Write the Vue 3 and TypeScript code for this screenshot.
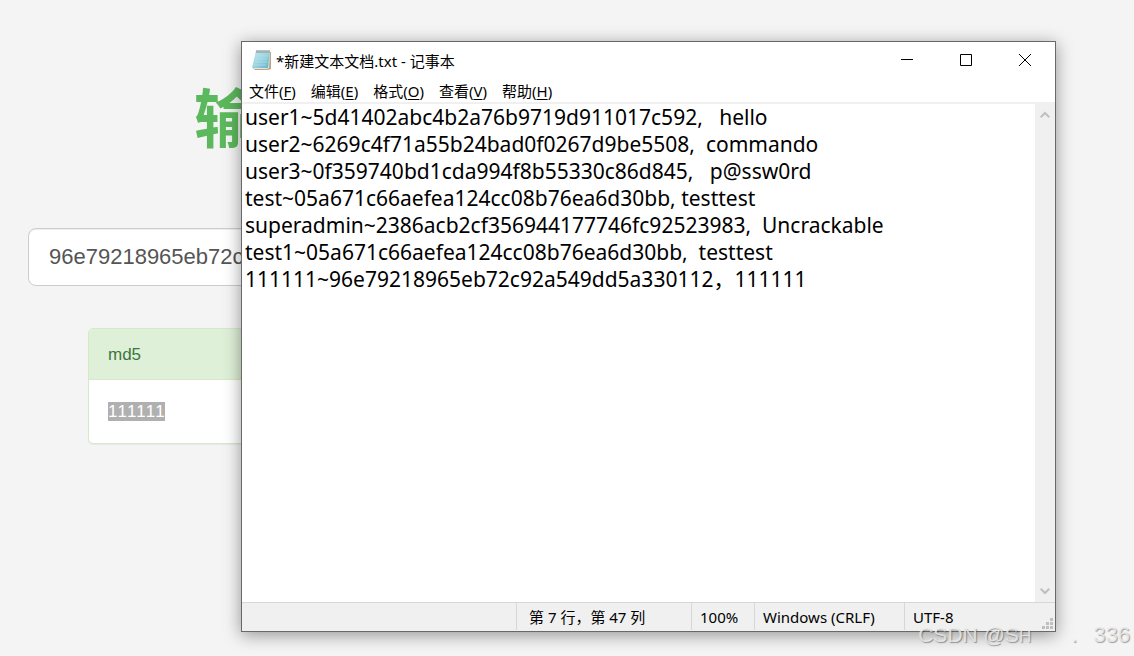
<script setup lang="ts">
import { ref } from 'vue'

interface MenuItem {
  label: string
  key: string
}

const menus: MenuItem[] = [
  { label: '文件', key: 'F' },
  { label: '编辑', key: 'E' },
  { label: '格式', key: 'O' },
  { label: '查看', key: 'V' },
  { label: '帮助', key: 'H' },
]

const hash = ref('96e79218965eb72c92a549dd5a330112')

const content = ref(
  [
    'user1~5d41402abc4b2a76b9719d911017c592,   hello',
    'user2~6269c4f71a55b24bad0f0267d9be5508,  commando',
    'user3~0f359740bd1cda994f8b55330c86d845,   p@ssw0rd',
    'test~05a671c66aefea124cc08b76ea6d30bb, testtest',
    'superadmin~2386acb2cf356944177746fc92523983,  Uncrackable',
    'test1~05a671c66aefea124cc08b76ea6d30bb,  testtest',
    '111111~96e79218965eb72c92a549dd5a330112，111111',
  ].join('\n'),
)
</script>

<template>
  <div class="desktop">
    <main class="page">
      <h1 class="heading">输</h1>
      <input v-model="hash" class="hash" type="text" aria-label="md5" />
      <section class="panel">
        <h2 class="panel-head">md5</h2>
        <p class="panel-body"><span class="selected">111111</span></p>
      </section>
    </main>

    <section class="window">
      <header class="titlebar">
        <svg class="app-icon" width="22" height="22" viewBox="0 0 22 22" aria-hidden="true">
          <defs>
            <linearGradient id="pad" x1="0" y1="0" x2="1" y2="1">
              <stop offset="0" stop-color="#c4e9f0" />
              <stop offset="0.5" stop-color="#9ad5e2" />
              <stop offset="1" stop-color="#5fb0c6" />
            </linearGradient>
          </defs>
          <path d="M5 3 L20 3 L20 20 L17 21 L4 21 L2 19 Z" fill="#b9a68a" />
          <path d="M5 2 L19 2 L18 19 L16 20 L3 20 Z" fill="#e9e4d8" />
          <path d="M5 2 L19 2 L17 19 L1 19 Z" fill="url(#pad)" />
          <path d="M5 2 L19 2 L19 4 L5 4 Z" fill="#d8e3e4" />
          <path d="M6 1v3M8 1v3M10 1v3M12 1v3M14 1v3M16 1v3M18 1v3" stroke="#6f8488" stroke-width="1" />
          <path d="M5 7h12M4 10h12M4 13h12M3 16h12" stroke="#bce4eb" stroke-width="1" opacity="0.6" />
        </svg>
        <span class="title">*新建文本文档.txt - 记事本</span>
        <div class="controls">
          <button type="button" aria-label="最小化">
            <svg width="12" height="12" viewBox="0 0 12 12"><path d="M0 5.5h12" stroke="#000" /></svg>
          </button>
          <button type="button" aria-label="最大化">
            <svg width="12" height="12" viewBox="0 0 12 12"><path d="M.5 .5h11v11H.5z" stroke="#000" fill="none" /></svg>
          </button>
          <button type="button" aria-label="关闭">
            <svg width="12" height="12" viewBox="0 0 12 12"><path d="M0 0L12 12M12 0L0 12" stroke="#000" /></svg>
          </button>
        </div>
      </header>

      <nav class="menubar">
        <button v-for="m in menus" :key="m.key" type="button">{{ m.label }}(<u>{{ m.key }}</u>)</button>
      </nav>

      <div class="editor">
        <textarea v-model="content" aria-label="文本编辑器" spellcheck="false" wrap="off"></textarea>
        <div class="scrollbar">
          <button type="button" aria-label="向上滚动">
            <svg width="10" height="8" viewBox="0 0 10 8"><path d="M.7 6.3L5 2L9.3 6.3" /></svg>
          </button>
          <button type="button" aria-label="向下滚动">
            <svg width="10" height="8" viewBox="0 0 10 8"><path d="M.7 1.7L5 6L9.3 1.7" /></svg>
          </button>
        </div>
      </div>

      <footer class="statusbar">
        <span class="cell position">第 7 行，第 47 列</span>
        <span class="cell zoom">100%</span>
        <span class="cell eol">Windows (CRLF)</span>
        <span class="cell encoding">UTF-8</span>
        <svg class="grip" width="11" height="11" viewBox="0 0 11 11" aria-hidden="true">
          <path d="M8 0h3v3h-3zM8 4h3v3h-3zM4 4h3v3h-3zM8 8h3v3h-3zM4 8h3v3h-3zM0 8h3v3h-3z" fill="#bfbfbf" />
        </svg>
      </footer>
    </section>

    <div class="watermark">
      <span class="brand">CSDN @S<small>H</small></span>
      <span class="dot">.</span>
      <span>336</span>
    </div>
  </div>
</template>

<style>
body {
  margin: 0;
  background: #f4f4f4;
}
</style>

<style scoped>
.desktop {
  position: relative;
  min-height: 100vh;
  overflow: hidden;
  background: #f4f4f4;
  font-family: "Liberation Sans", "Noto Sans CJK SC", sans-serif;
}

button {
  border: 0;
  padding: 0;
  background: none;
  font: inherit;
  color: inherit;
}

.page {
  padding: 72px 104px 0 28px;
}

.heading {
  margin: 0 0 60px 166px;
  font-size: 64px;
  line-height: 96px;
  font-weight: 700;
  color: #5cb85c;
}

.hash {
  display: block;
  box-sizing: border-box;
  width: 100%;
  height: 58px;
  padding: 0 20px;
  border: 1px solid #ccc;
  border-radius: 8px;
  background: #fff;
  box-shadow: inset 0 1px 1px rgba(0, 0, 0, 0.075);
  color: #555;
  font-family: inherit;
  font-size: 22px;
}

.panel {
  margin: 42px 60px 0;
  border: 1px solid #d6e9c6;
  border-radius: 5px;
  overflow: hidden;
  background: #fff;
  box-shadow: 0 1px 1px rgba(0, 0, 0, 0.05);
  font-size: 17px;
  font-kerning: none;
}

.panel-head {
  margin: 0;
  padding: 13px 19px 12px;
  border-bottom: 1px solid #d6e9c6;
  background: #dff0d8;
  color: #3c763d;
  font-size: inherit;
  font-weight: 400;
  line-height: 25px;
}

.panel-body {
  margin: 0;
  padding: 19px;
  line-height: 25px;
}

.selected {
  background: #b0b0b0;
  color: #fff;
}

.window {
  position: absolute;
  inset: 41px 78px 24px 241px;
  display: flex;
  flex-direction: column;
  border: 1px solid #696969;
  background: #fff;
  box-shadow: 0 3px 16px rgba(0, 0, 0, 0.4);
  color: #000;
  font-family: "Noto Sans", "Noto Sans CJK SC", sans-serif;
  font-size: 15px;
}

.titlebar {
  display: flex;
  align-items: center;
  height: 36px;
  padding: 0 1px 0 9px;
}

.title {
  flex: 1;
  margin-left: 3px;
  font-size: 15px;
  white-space: nowrap;
}

.controls {
  display: flex;
  height: 100%;
}

.controls button {
  display: flex;
  align-items: center;
  justify-content: center;
  width: 59px;
}

.menubar {
  display: flex;
  gap: 15px;
  height: 24px;
  padding-left: 7px;
  border-bottom: 2px solid #f0f0f0;
  line-height: 26px;
}

.menubar u {
  text-underline-offset: 2px;
}

.editor {
  display: flex;
  flex: 1;
  min-height: 0;
}

textarea {
  flex: 1;
  min-width: 0;
  margin: 0;
  padding: 0 3px;
  border: 0;
  outline: 0;
  resize: none;
  overflow: hidden;
  background: #fff;
  color: #000;
  font-family: "Noto Sans", "Noto Sans CJK SC", sans-serif;
  font-size: 21px;
  line-height: 27px;
  white-space: pre;
}

.scrollbar {
  display: flex;
  flex-direction: column;
  justify-content: space-between;
  width: 20px;
  background: #f0f0f0;
}

.scrollbar button {
  display: flex;
  align-items: center;
  justify-content: center;
  height: 22px;
}

.scrollbar path {
  fill: none;
  stroke: #bfbfbf;
  stroke-width: 2;
}

.statusbar {
  position: relative;
  display: flex;
  justify-content: flex-end;
  height: 28px;
  border-top: 1px solid #d7d7d7;
  background: #f0f0f0;
  line-height: 28px;
}

.cell {
  box-sizing: border-box;
  height: 27px;
  padding-left: 8px;
  border-left: 1px solid #d7d7d7;
  white-space: nowrap;
}

.position {
  width: 175px;
  padding-left: 12px;
}

.zoom {
  width: 63px;
}

.eol {
  width: 150px;
}

.encoding {
  width: 151px;
}

.grip {
  position: absolute;
  right: 2px;
  bottom: 2px;
}

.watermark {
  position: absolute;
  right: 4px;
  bottom: 6px;
  display: flex;
  color: rgba(235, 235, 235, 0.85);
  font-size: 22px;
  line-height: 26px;
  text-shadow: 1px 1px 1px rgba(0, 0, 0, 0.35);
}

.brand {
  font-size: 21px;
}

.watermark small {
  font-size: 17px;
}

.dot {
  margin: 0 16px 0 40px;
}
</style>
